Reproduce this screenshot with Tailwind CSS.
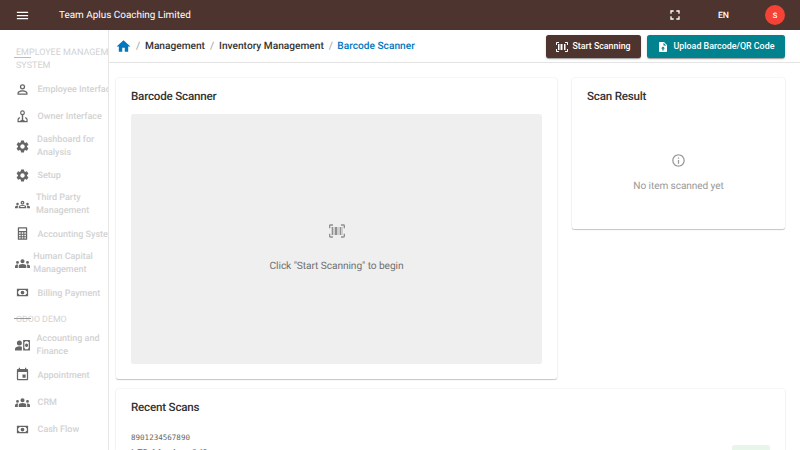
<!DOCTYPE html>
<html lang="en">
<head>
<meta charset="utf-8">
<title>Barcode Scanner</title>
<script src="https://cdn.jsdelivr.net/npm/@tailwindcss/browser@4"></script>
</head>
<body class="h-[450px] w-[800px] overflow-hidden bg-white font-['Roboto',sans-serif] text-[#333] [text-rendering:geometricPrecision]">
<svg class="hidden">
  <symbol id="scan" viewBox="0 0 24 24"><path d="M4 6h2v12H4zm3 0h1v12H7zm2 0h3v12H9zm4 0h1v12h-1zm3 0h2v12h-2zm3 0h1v12h-1zM2 4v4H0V4c0-1.100.900-2 2-2h4v2H2zm22-0v4h-2V4h-4V2h4c1.100 0 2 .900 2 2zM2 16v4h4v2H2c-1.100 0-2-.900-2-2v-4h2zm20 4v-4h2v4c0 1.100-.900 2-2 2h-4v-2h4z"/></symbol>
  <symbol id="gear" viewBox="0 0 24 24"><path d="M19.140 12.940c.040-.300.060-.610.060-.940 0-.320-.020-.640-.070-.940l2.030-1.580c.180-.140.230-.410.120-.610l-1.920-3.320c-.120-.220-.370-.290-.590-.220l-2.390.960c-.500-.380-1.030-.700-1.620-.940l-.360-2.540c-.040-.240-.240-.410-.480-.410h-3.840c-.240 0-.430.170-.470.410l-.360 2.540c-.590.240-1.130.570-1.620.940l-2.390-.960c-.220-.080-.470 0-.590.220L2.740 8.870c-.120.210-.080.470.120.610l2.030 1.580c-.050.300-.090.630-.090.940s.020.640.070.940l-2.030 1.580c-.180.140-.230.410-.120.610l1.920 3.320c.120.220.370.290.590.220l2.390-.960c.500.380 1.030.700 1.620.940l.360 2.540c.050.240.240.410.480.410h3.840c.240 0 .440-.170.470-.410l.360-2.540c.590-.240 1.130-.560 1.620-.940l2.390.960c.220.080.470 0 .590-.220l1.920-3.320c.120-.220.070-.470-.120-.610l-2.010-1.580zM12 15.600c-1.980 0-3.600-1.620-3.600-3.600s1.620-3.600 3.600-3.600 3.600 1.620 3.600 3.600-1.620 3.600-3.600 3.600z"/></symbol>
  <symbol id="groups" viewBox="0 0 24 24"><path d="M12 12.750c1.630 0 3.070.390 4.240.900 1.080.480 1.760 1.560 1.760 2.730V19H6v-2.610c0-1.180.680-2.260 1.760-2.730 1.170-.520 2.610-.910 4.240-.910zM4 12.500a2.300 2.300 0 1 0 0-4.600 2.300 2.300 0 0 0 0 4.600zm1.130 1.300C4.760 13.740 4.390 13.700 4 13.700c-.990 0-1.930.210-2.780.580C.480 14.900 0 15.620 0 16.430V19h4.500v-2.610c0-.830.230-1.910.630-2.590zM20 12.500a2.300 2.300 0 1 0 0-4.600 2.300 2.300 0 0 0 0 4.600zm4 3.930c0-.810-.480-1.530-1.220-1.850-.850-.370-1.790-.880-2.780-.880-.390 0-.760.040-1.130.100.400.680.630 1.760.630 2.590V19H24v-2.570zM12 5a3.300 3.300 0 1 1 0 6.600A3.300 3.300 0 0 1 12 5z"/></symbol>
  <symbol id="cash" viewBox="0 0 24 24"><path fill-rule="evenodd" d="M3 6h18v12H3zM7 8a2 2 0 0 1-2 2v4a2 2 0 0 1 2 2h10a2 2 0 0 1 2-2v-4a2 2 0 0 1-2-2zM12 9a3 3 0 1 1 0 6 3 3 0 0 1 0-6z"/></symbol>
</svg>

<header class="flex h-[30px] items-center bg-[#4e342e] pr-[15px] pl-[15px] text-white">
  <svg class="size-[15px] fill-current" viewBox="0 0 24 24"><path d="M3 18h18v-2H3v2zm0-5h18v-2H3v2zm0-7v2h18V6H3z"/></svg>
  <h1 class="ml-[29px] pt-px text-[9.930px] leading-[15px]">Team Aplus Coaching Limited</h1>
  <svg class="ml-auto size-[16px] fill-current" viewBox="0 0 24 24"><path d="M7 14H5v5h5v-2H7v-3zm-2-4h2V7h3V5H5v5zm12 7h-3v2h5v-5h-2v3zM14 5v2h3v3h2V5h-5z"/></svg>
  <span class="mt-[3px] ml-[35px] text-[8.700px] font-medium">EN</span>
  <span class="ml-[36px] flex size-[20px] items-center justify-center rounded-full bg-[#f44336] pt-px text-[7.500px] font-medium">S</span>
</header>

<div class="flex h-[420px]">
  <aside class="h-full w-[109px] shrink-0 overflow-hidden border-r border-[#e6e6e6] text-[9px] leading-[13px] font-medium text-[#d2d2d2]">
    <div class="relative mt-[15.600px] ml-[16px] w-[110px] font-normal"><span class="relative top-[1px]">EMPLOYEE MANAGEMENT SYSTEM</span><i class="absolute top-[11.400px] -left-[2px] h-px w-[17px] bg-[#bdbdbd]"></i></div>
    <nav class="whitespace-nowrap text-[#d2d2d2] [&_span]:pt-[1.600px] [&_svg]:size-[15px] [&_svg]:shrink-0 [&_svg]:fill-[#666]">
      <div class="mt-[4px] flex h-[27px] items-center pl-[15px]"><svg viewBox="0 0 24 24"><path fill-rule="evenodd" d="M12 3.500a4.200 4.200 0 1 1 0 8.400 4.200 4.200 0 0 1 0-8.400zm0 2a2.200 2.200 0 1 0 0 4.400 2.200 2.200 0 0 0 0-4.400zM4 20.500v-3c0-3 5-4.300 8-4.300s8 1.300 8 4.300v3zm2-2h12v-1c0-1.100-3.200-2.300-6-2.300s-6 1.200-6 2.300z"/></svg><span class="mt-[1.500px] ml-[7.500px]">Employee Interface</span></div>
      <div class="flex h-[28px] items-center pl-[15px]"><svg viewBox="0 0 24 24"><path fill-rule="evenodd" d="M12 2a4 4 0 0 1 1.100 7.800V17l3.400 2h1.800v-2.200c0-1-1-1.700-2.300-2.200l.6-1.700c2.200.7 3.600 2 3.600 4V21H4v-4.100c0-2 1.400-3.300 3.600-4l.6 1.700c-1.300.5-2.300 1.200-2.300 2.200V19h1.600l3.400-2V9.800A4 4 0 0 1 12 2zm0 2a2 2 0 1 0 0 4 2 2 0 0 0 0-4z"/></svg><span class="ml-[7.500px]">Owner Interface</span></div>
      <div class="flex h-[31px] items-center pl-[15px]"><svg><use href="#gear"/></svg><span class="ml-[7px]">Dashboard for<br>Analysis</span></div>
      <div class="flex h-[27px] items-center pl-[15px]"><svg><use href="#gear"/></svg><span class="mt-[1.500px] ml-[7.500px]">Setup</span></div>
      <div class="flex h-[31px] items-center pl-[15px]"><svg viewBox="0 0 24 24"><path fill-rule="evenodd" d="M4 13c1.100 0 2-.900 2-2s-.900-2-2-2-2 .900-2 2 .900 2 2 2zm1.130 1.100C4.760 14.040 4.390 14 4 14c-.990 0-1.930.210-2.780.580C.480 14.900 0 15.620 0 16.430V18h4.500v-1.610c0-.830.230-1.610.630-2.290zM20 13c1.100 0 2-.900 2-2s-.900-2-2-2-2 .900-2 2 .900 2 2 2zm4 3.430c0-.810-.480-1.530-1.220-1.850-.850-.370-1.790-.580-2.780-.580-.390 0-.760.040-1.130.100.400.680.630 1.460.630 2.290V18H24v-1.570zM16.240 13.650c-1.170-.520-2.610-.900-4.240-.900s-3.070.390-4.240.900C6.680 14.130 6 15.210 6 16.390V18h12v-1.610c0-1.180-.680-2.260-1.760-2.740zM8.070 16c.100-.600.500-.950.880-1.100.850-.360 1.950-.650 3.050-.650s2.200.290 3.050.650c.380.150.780.500.880 1.100zM12 8c.550 0 1 .450 1 1s-.450 1-1 1-1-.450-1-1 .450-1 1-1m0-2c-1.660 0-3 1.340-3 3s1.340 3 3 3 3-1.340 3-3-1.340-3-3-3z"/></svg><span class="mt-px ml-[6px]">Third Party<br>Management</span></div>
      <div class="flex h-[28px] items-center pl-[15px]"><svg viewBox="0 0 24 24"><path fill-rule="evenodd" d="M5.500 2h13a1 1 0 0 1 1 1v18a1 1 0 0 1-1 1h-13a1 1 0 0 1-1-1V3a1 1 0 0 1 1-1zm1 2v4h11V4zm0 6v2.500H9V10zm4.250 0v2.500h2.500V10zM15 10v2.500h2.500V10zM6.500 14v2.500H9V14zm4.250 0v2.500h2.500V14zM15 14v2.500h2.500V14zM6.500 18v2H9v-2zm4.250 0v2h2.500v-2zM15 18v2h2.500v-2z"/></svg><span class="mt-[1.500px] ml-[7.500px]">Accounting System</span></div>
      <div class="flex h-[31px] items-center pl-[15px]"><svg><use href="#groups"/></svg><span class="ml-[3.300px]">Human Capital<br>Management</span></div>
      <div class="flex h-[28px] items-center pl-[15px]"><svg><use href="#cash"/></svg><span class="mt-[1.500px] ml-[7.500px]">Billing Payment</span></div>
      <div class="relative mt-[6px] ml-[16px] h-[13px] text-[8.800px] font-normal"><b class="relative top-[1px] font-normal">ODOO DEMO</b><i class="absolute top-[5.400px] -left-[2px] h-px w-[17px] bg-[#999]"></i></div>
      <div class="mt-[4px] flex h-[31px] items-center pl-[15px]"><svg viewBox="0 0 24 24"><path fill-rule="evenodd" d="M7 4a4 4 0 1 1 0 8 4 4 0 0 1 0-8zM0 20v-3c0-2.600 4-4 7-4 1.500 0 3 .3 4 .8V20zM13 3h10a1 1 0 0 1 1 1v15a1 1 0 0 1-1 1H13zm3.500 2a1.500 1.500 0 0 1-1.500 1.500v10a1.500 1.500 0 0 1 1.500 1.500h4a1.500 1.500 0 0 1 1.500-1.500v-10A1.500 1.500 0 0 1 20.500 5zm2 3.700a2.500 2.800 0 1 1 0 5.600 2.500 2.800 0 0 1 0-5.600z"/></svg><span class="ml-[6.500px]">Accounting and<br>Finance</span></div>
      <div class="flex h-[28px] items-center pl-[15px]"><svg viewBox="0 0 24 24"><path d="M17 12h-5v5h5v-5zM16 1v2H8V1H6v2H5c-1.110 0-1.990.900-1.990 2L3 19c0 1.100.890 2 2 2h14c1.100 0 2-.900 2-2V5c0-1.100-.900-2-2-2h-1V1h-2zm3 18H5V8h14v11z"/></svg><span class="mt-[1.500px] ml-[7.500px]">Appointment</span></div>
      <div class="flex h-[27px] items-center pl-[15px]"><svg><use href="#groups"/></svg><span class="mt-[1.500px] ml-[7.500px]">CRM</span></div>
      <div class="flex h-[28px] items-center pl-[15px]"><svg><use href="#cash"/></svg><span class="mt-px ml-[7.500px]">Cash Flow</span></div>
    </nav>
  </aside>

  <main class="min-w-0 flex-1">
    <div class="flex h-[33px] items-center border-b border-[#e4e4e4] pr-[15px] pl-[7px]">
      <nav class="flex items-center text-[10.170px] leading-[15px] font-medium whitespace-nowrap">
        <svg class="size-[15px] fill-[#0277bd]" viewBox="0 0 24 24"><path d="M10 20.500v-6.500h4v6.500h5.500v-8.500H23L12 2 1 12h3.500v8.500z"/></svg>
        <span class="ml-[5px] w-[4px] font-normal text-[#999]">/</span>
        <span class="ml-[5px]">Management</span>
        <span class="ml-[5px] w-[4px] font-normal text-[#999]">/</span>
        <span class="ml-[5px]">Inventory Management</span>
        <span class="ml-[5px] w-[4px] font-normal text-[#999]">/</span>
        <span class="ml-[4.500px] text-[#0277bd]">Barcode Scanner</span>
      </nav>
      <button class="ml-auto flex h-[23px] w-[95px] items-center rounded-[2.500px] bg-[#4e342e] pt-px pl-[10px] text-[8.800px] font-medium whitespace-nowrap text-white shadow-[0_2px_1px_-1px_rgba(0,0,0,.2),0_1px_1px_rgba(0,0,0,.14),0_1px_3px_rgba(0,0,0,.12)]"><svg class="mr-[4.500px] size-[12px] fill-current"><use href="#scan"/></svg>Start Scanning</button>
      <button class="ml-[6px] flex h-[23px] w-[138px] items-center rounded-[2.500px] bg-[#00838f] pt-px pl-[10px] text-[8.900px] font-medium whitespace-nowrap text-white shadow-[0_2px_1px_-1px_rgba(0,0,0,.2),0_1px_1px_rgba(0,0,0,.14),0_1px_3px_rgba(0,0,0,.12)]"><svg class="mr-[4.500px] size-[12px] fill-current" viewBox="0 0 24 24"><path fill-rule="evenodd" d="M6 2h8l6 6v12c0 1.100-.9 2-2 2H6c-1.100 0-2-.9-2-2V4c0-1.100.9-2 2-2zm7 1.500V9h5.500zM12 11l-4 4h2.700v4h2.600v-4H16z"/></svg>Upload Barcode/QR Code</button>
    </div>

    <div class="flex items-start gap-[15px] pt-[15px] pr-[15px] pl-[7px] text-[11.600px] leading-[18px] font-medium">
      <section class="h-[301px] w-[441px] rounded-[2.500px] bg-white px-[15px] pt-[9px] shadow-[0_1px_1px_rgba(0,0,0,.2),0_0_2px_rgba(0,0,0,.12)]">
        <h2 class="tracking-[-0.200px]">Barcode Scanner</h2>
        <div class="mt-[9px] flex h-[250px] flex-col items-center rounded-[2.500px] bg-[#efefef] pt-[108.500px] text-[10.200px] font-normal tracking-[-0.090px] text-[#707070]">
          <svg class="size-[16px] fill-[#909090]"><use href="#scan"/></svg>
          <p class="mt-[19.500px]">Click "Start Scanning" to begin</p>
        </div>
      </section>
      <section class="h-[151px] flex-1 rounded-[2.500px] bg-white px-[15px] pt-[9px] shadow-[0_1px_1px_rgba(0,0,0,.2),0_0_2px_rgba(0,0,0,.12)]">
        <h2 class="tracking-[-0.200px]">Scan Result</h2>
        <div class="flex flex-col items-center pt-[48px] text-[10.100px] font-normal tracking-[-0.090px] text-[#999]">
          <svg class="size-[15px] fill-current" viewBox="0 0 24 24"><path d="M11 7h2v2h-2zm0 4h2v6h-2zm1-9C6.480 2 2 6.480 2 12s4.480 10 10 10 10-4.480 10-10S17.520 2 12 2zm0 18c-4.410 0-8-3.590-8-8s3.590-8 8-8 8 3.590 8 8-3.590 8-8 8z"/></svg>
          <p class="mt-[10px]">No item scanned yet</p>
        </div>
      </section>
    </div>

    <section class="mt-[10px] mr-[15px] ml-[7px] h-[61px] overflow-hidden rounded-t-[2.500px] bg-white px-[15px] pt-[8.500px] shadow-[0_1px_1px_rgba(0,0,0,.2),0_0_2px_rgba(0,0,0,.12)]">
      <h2 class="text-[11.600px] leading-[18px] font-medium tracking-[-0.200px]">Recent Scans</h2>
      <div class="mt-[16px] flex items-start justify-between">
        <div>
          <p class="font-['DejaVu_Sans_Mono',monospace] text-[7.540px] leading-[12px] text-[#666]">8901234567890</p>
          <p class="mt-[2px] text-[10.500px] leading-[16px] font-medium text-[#222]">LED Monitor 24"</p>
        </div>
        <span class="mt-[13.500px] h-[15px] w-[38px] rounded-[2.500px] bg-[#e8f5e9]"></span>
      </div>
    </section>
  </main>
</div>
</body>
</html>
